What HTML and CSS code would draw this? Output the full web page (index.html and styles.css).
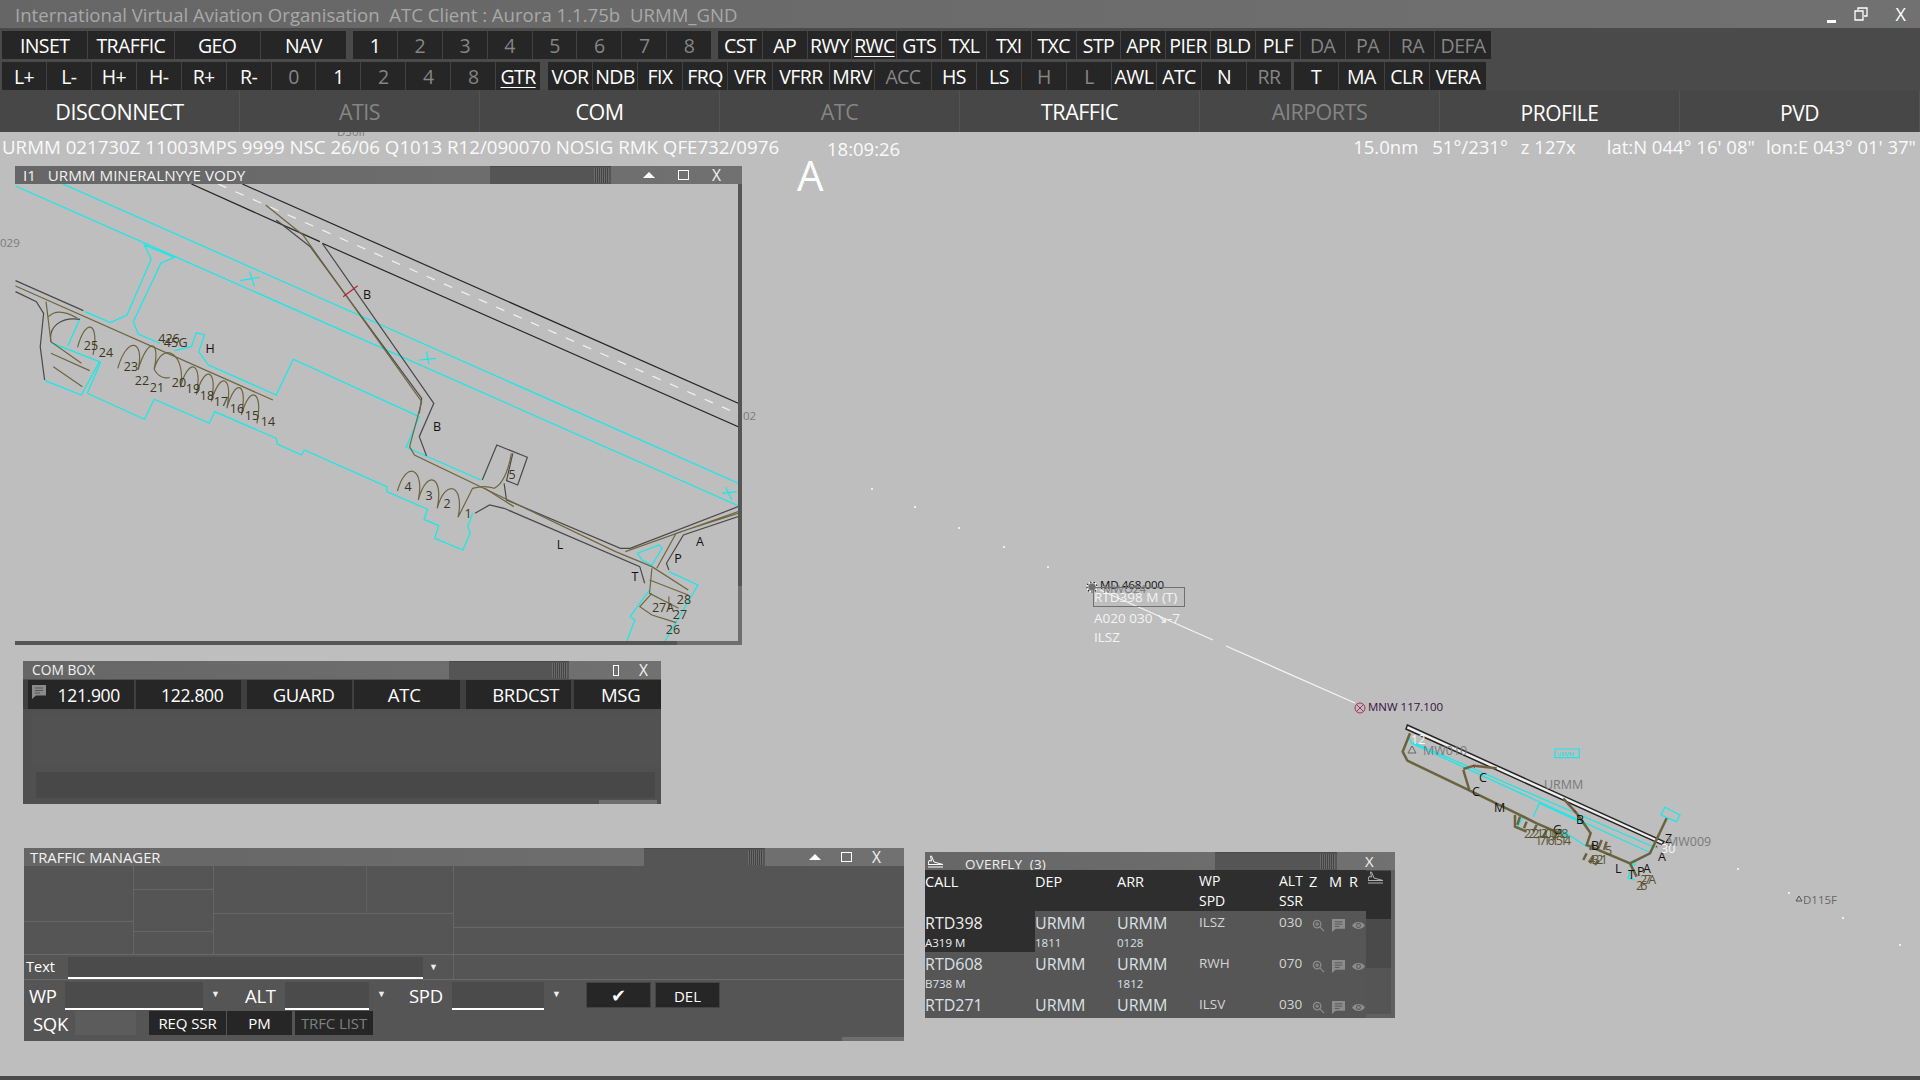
FILE: index.html
```html
<!DOCTYPE html>
<html lang="en">
<head>
<meta charset="utf-8">
<title>Aurora ATC Client</title>
<link rel="stylesheet" href="styles.css">
</head>
<body>
<svg class="defs" width="0" height="0">
  <symbol id="i-mag" viewBox="0 0 14 14"><circle cx="5.5" cy="5.5" r="4" fill="none" stroke="currentColor" stroke-width="1.4"/><path d="M8.5 8.5L13 13M3.5 5.5h4M5.5 3.5v4" stroke="currentColor" stroke-width="1.3" fill="none"/></symbol>
  <symbol id="i-chat" viewBox="0 0 14 14"><path d="M0 0h14v10.500h-10l-4 3.500z" fill="currentColor"/><path d="M3 3h8M3 5.500h8M3 8h5" stroke="#565656" stroke-width="1"/></symbol>
  <symbol id="i-eye" viewBox="0 0 14 10"><path d="M0 5C3 0 11 0 14 5C11 10 3 10 0 5z" fill="currentColor"/><circle cx="7" cy="5" r="2.600" fill="#565656"/><circle cx="7" cy="5" r="1.500" fill="currentColor"/></symbol>
  <symbol id="i-plane" viewBox="0 0 15 13"><path d="M0 12h15M0 9.500h15L6 7 3.500 1h-1l1 5L1 5.500z" stroke="currentColor" stroke-width="1" fill="none"/></symbol>
</svg>

<header class="titlebar">
  <span class="app-title">International Virtual Aviation Organisation&nbsp; ATC Client : Aurora 1.1.75b&nbsp; URMM_GND</span>
  <div class="app-controls">
    <span class="min-mark"></span>
    <svg class="restore" width="14" height="14" viewBox="0 0 14 14"><path d="M4 3V1h9v8h-3M1 4h8v9H1z" fill="none" stroke="#fff" stroke-width="1.300"/></svg>
    <span class="app-x">X</span>
  </div>
</header>

<nav class="toolbar">
  <div class="tool-row">
    <div class="group g1a"><button class="btn">INSET</button><button class="btn">TRAFFIC</button><button class="btn">GEO</button><button class="btn">NAV</button></div>
    <div class="group g1b"><button class="btn">1</button><button class="btn dim">2</button><button class="btn dim">3</button><button class="btn dim">4</button><button class="btn dim">5</button><button class="btn dim">6</button><button class="btn dim">7</button><button class="btn dim">8</button></div>
    <div class="group g1c"><button class="btn">CST</button><button class="btn">AP</button><button class="btn">RWY</button><button class="btn"><u>RWC</u></button><button class="btn">GTS</button><button class="btn">TXL</button><button class="btn">TXI</button><button class="btn">TXC</button><button class="btn">STP</button><button class="btn">APR</button><button class="btn">PIER</button><button class="btn">BLD</button><button class="btn">PLF</button><button class="btn dim">DA</button><button class="btn dim">PA</button><button class="btn dim">RA</button><button class="btn dim wide">DEFA</button></div>
  </div>
  <div class="tool-row">
    <div class="group g2a"><button class="btn">L+</button><button class="btn">L-</button><button class="btn">H+</button><button class="btn">H-</button><button class="btn">R+</button><button class="btn">R-</button><button class="btn dim">0</button><button class="btn">1</button><button class="btn dim">2</button><button class="btn dim">4</button><button class="btn dim">8</button><button class="btn"><u>GTR</u></button></div>
    <div class="group g2b"><button class="btn">VOR</button><button class="btn">NDB</button><button class="btn">FIX</button><button class="btn">FRQ</button><button class="btn">VFR</button><button class="btn wide">VFRR</button><button class="btn">MRV</button><button class="btn dim wide">ACC</button><button class="btn">HS</button><button class="btn">LS</button><button class="btn dim">H</button><button class="btn dim">L</button><button class="btn">AWL</button><button class="btn">ATC</button><button class="btn">N</button><button class="btn dim">RR</button></div>
    <div class="group g2c"><button class="btn">T</button><button class="btn">MA</button><button class="btn">CLR</button><button class="btn wide">VERA</button></div>
  </div>
</nav>

<nav class="tabs">
  <div class="tab">DISCONNECT</div><div class="tab dim">ATIS</div><div class="tab">COM</div><div class="tab dim">ATC</div><div class="tab">TRAFFIC</div><div class="tab dim">AIRPORTS</div><div class="tab low">PROFILE</div><div class="tab low">PVD</div>
</nav>

<main class="desktop">
  <div class="status">
    <span class="metar">URMM 021730Z 11003MPS 9999 NSC 26/06 Q1013 R12/090070 NOSIG RMK QFE732/0976</span>
    <span class="clock">18:09:26</span>
    <div class="readout"><span>15.0nm</span><span>51°/231°</span><span>z 127x</span><span>lat:N 044° 16' 08"</span><span>lon:E 043° 01' 37"</span></div>
  </div>
  <div class="big-a">A</div>

  <svg class="scope" viewBox="0 132 1920 948" width="1920" height="948">
    <text class="gray-lbl" x="337" y="136">D30II</text>
    <text class="gray-lbl" x="0" y="247">029</text>
    <text class="gray-lbl" x="743" y="420">02</text>
    <g fill="#fff">
      <circle cx="872" cy="489" r="1"/><circle cx="915" cy="507" r="1"/><circle cx="959" cy="528" r="1"/><circle cx="1004" cy="547" r="1"/><circle cx="1048" cy="567" r="1"/>
      <circle cx="1738" cy="869" r="1"/><circle cx="1789" cy="893" r="1"/><circle cx="1843" cy="918" r="1"/><circle cx="1900" cy="945" r="1"/>
    </g>
    <path d="M1100 590L1213 640M1226 646L1355 703" stroke="#f4f4f4" stroke-width="1.300" fill="none"/>
    <circle cx="1092" cy="587" r="3.500" fill="#707070"/>
    <circle cx="1092" cy="587" r="5" fill="none" stroke="#fff" stroke-width="1.200"/>
    <circle cx="1092" cy="587" r="5" fill="none" stroke="#111" stroke-width="1.200" stroke-dasharray="1.500 2"/>
    <text class="wp-text" x="1100" y="589">MD 468.000</text>
    <text class="gray-lbl" x="1103" y="593">MWO24</text>
    <rect x="1093.500" y="587.500" width="91" height="19" fill="none" stroke="#707070"/>
    <text class="tag" x="1094" y="602">RTD398 M (T)</text>
    <text class="tag" x="1094" y="623">A020 030 ↘-7</text>
    <text class="tag" x="1094" y="642">ILSZ</text>
    <circle cx="1360" cy="708" r="5" fill="none" stroke="#a8325f"/>
    <path d="M1356.500 704.500l7 7M1363.500 704.500l-7 7" stroke="#a8325f"/>
    <text class="wp-text purple" x="1368" y="711">MNW 117.100</text>
    <path d="M1796 901l3-5 3 5z" fill="none" stroke="#555"/>
    <text class="gray-lbl dark" x="1803" y="904">D115F</text>

    <g transform="translate(1380,700) scale(.3333)" class="lines">
      <path class="rw" d="M82 75L852 425L846 434L78 87Z"/>
      <path class="cy" d="M88 115L95 130L815 460M100 128L830 445M460 350L478 310L620 375M410 385L430 350L560 410L545 390L620 440L630 400"/>
      <path class="cy" d="M525 147H598V173H525ZM855 322L900 345L890 365L843 345Z"/>
      <path class="cy" d="M262 268L270 275M745 490L765 480L765 495ZM750 510L745 535L765 540"/>
      <path class="ol2" d="M90 100L68 155L82 182L265 270L410 340L470 370L540 400M250 207L282 197L350 205M250 210L268 270M405 345V380L440 395M550 295L590 340L632 400L620 435L750 490L810 460L860 355M750 490L770 530"/>
      <path class="ol2" d="M420 350L412 375M440 365L432 385M470 375L460 395M500 390L490 410M530 400L520 420M640 430L630 450M665 420L655 445M680 425L672 450M620 460L610 480M640 470L630 490M655 480L645 495"/>
      <path class="rd" d="M280 195L284 203M583 330L588 337M828 438L832 442"/>
    </g>
    <g class="air-lbl">
      <text class="wh" x="1411" y="744">12</text>
      <text class="gr" x="1423" y="755">MW010</text>
      <path d="M1412 746l4 7h-8z" fill="none" stroke="#666"/>
      <text class="cyt" x="1557" y="756">URMM</text>
      <text class="gr" x="1544" y="789">URMM</text>
      <text x="1479" y="782">C</text><text x="1472" y="796">C</text><text x="1494" y="812">M</text>
      <text x="1553" y="834">G</text><text class="ol3" x="1524" y="838">2221201918</text><text class="ol3" x="1535" y="845">17161514</text>
      <text x="1576" y="824">B</text><text x="1591" y="850">B</text><text class="ol3" x="1605" y="855">5</text><text class="ol3" x="1588" y="864">4321</text>
      <text x="1615" y="873">L</text><text x="1628" y="879">T</text><text x="1637" y="876">P</text><text x="1643" y="873">A</text><text x="1658" y="861">A</text>
      <text class="ol3" x="1640" y="884">27A</text><text class="ol3" x="1636" y="890">26</text>
      <text class="wh" x="1661" y="853">30</text><text x="1665" y="843">Z</text>
      <text class="gr" x="1667" y="846">MW009</text>
    </g>
  </svg>

  <section class="win win-map">
    <div class="win-title"><span class="t-text">I1&nbsp;&nbsp; URMM MINERALNYYE VODY</span><div class="win-scroll"><i></i></div><div class="win-ctrl"><span class="tri"></span><span class="sq"></span><span>X</span></div></div>
    <div class="map-body">
      <svg class="inset" width="723" height="457" viewBox="0 0 723 457">
        <g transform="translate(-15,-24) scale(.4847,.3333)" class="lines">
          <path class="dk" d="M500 72L1523 730M395 72L660 245M665 250L1523 800"/>
          <path class="dash" d="M450 72L1515 757"/>
          <path class="cy" d="M130 72L1523 970M32 78L1523 1037"/>
          <path class="cy" d="M495 362L535 352M515 335L525 380M865 600L900 595M880 575L885 612M1490 1000L1520 995M1497 982L1510 1020"/>
          <path class="cy" d="M175 455L228 488L262 465L312 298L298 255L360 292L332 310L275 485L285 522L330 550M360 572L395 560L405 518L422 525L410 575L430 615L570 705L605 598L865 770L838 862L992 960"/>
          <path class="cy" d="M105 548L205 605L168 705L93 662M140 558L165 475M180 700L208 605M180 700L298 778L318 718L432 790L443 755L570 835L572 852L622 885L628 870L798 980L798 995L882 1048L875 1078L905 1097L897 1135L955 1170L970 1120L965 1100L975 1060"/>
          <path class="cy" d="M1380 1235L1440 1275L1372 1443M1340 1290L1300 1370L1310 1380L1293 1443M1315 1180L1360 1155L1366 1165L1345 1215L1325 1200Z"/>
          <path class="dkg" d="M570 180L640 260L870 715L865 760M665 250L895 730L865 830L880 888M980 1060L1010 1035L1040 1045L1320 1220L1330 1270M1040 970L1045 1020L1280 1165L1300 1165L1523 1040M1380 1230L1375 1210L1410 1125L1523 1070"/>
          <path class="dkg" d="M32 362L172 452M32 395L75 425L90 460L83 560L92 660M105 545C100 500 125 470 165 478M995 960L1025 855L1088 892L1068 975L1045 962L1058 880"/>
          <path class="ol" d="M548 135L625 225L870 725L845 860L855 885L1270 1175L1345 1220L1420 1290M1290 1175L1523 1055M1355 1225L1395 1120L1523 1060M1345 1225L1340 1300L1400 1345M1340 1260L1420 1305M1345 1300L1320 1340L1345 1365L1395 1388M1380 1310L1380 1350"/>
          <path class="ol" d="M32 378L563 720M95 425L105 545L168 610M105 580L185 632M110 620L170 680M100 470Q120 440 160 475"/>
          <path class="ol" d="M160 562C178 467 206 490 192 585M243 625C261 530 299 535 285 630M285 630C303 535 332 533 318 628M318 628C336 533 386 587 372 682M372 682C390 587 419 609 405 704M405 704C423 609 450 630 436 725M436 725C454 630 482 650 468 745M468 745C486 650 512 670 498 765M498 765C516 670 544 695 530 790M318 628Q330 660 350 652"/>
          <path class="ol" d="M820 993C838 898 877 925 863 1020M863 1020C881 925 916 950 902 1045M902 1045C920 950 959 977 945 1072M945 1072L975 985Q1000 975 1020 985Q1045 965 1055 880M1000 985L1060 1040"/>
          <path class="rd" d="M708 410L738 377"/>
        </g>
        <g class="lbl">
          <text x="352" y="115">B</text><text x="422" y="247">B</text><text x="195" y="169">H</text>
          <text class="o" x="76" y="166">25</text><text class="o" x="91" y="173">24</text><text class="o" x="116" y="187">23</text><text class="o" x="127" y="201">22</text><text class="o" x="142" y="208">21</text><text class="o" x="164" y="203">20</text><text class="o" x="178" y="209">19</text><text class="o" x="192" y="216">18</text><text class="o" x="206" y="222">17</text><text class="o" x="222" y="229">16</text><text class="o" x="237" y="236">15</text><text class="o" x="253" y="242">14</text>
          <text class="o" x="393" y="307">4</text><text class="o" x="414" y="316">3</text><text class="o" x="432" y="324">2</text><text class="o" x="453" y="334">1</text><text class="o" x="497" y="295">5</text>
          <text x="545" y="365">L</text><text x="685" y="362">A</text><text x="663" y="379">P</text><text x="620" y="397">T</text>
          <text class="o" x="648" y="428">27A</text><text class="o" x="669" y="420">28</text><text class="o" x="665" y="435">27</text><text class="o" x="658" y="450">26</text>
          <text class="o" x="154" y="159">426</text><text class="o" x="156" y="163">45</text><text class="o" x="168" y="163">G</text>
        </g>
      </svg>
      <div class="sb-v"></div>
      <div class="sb-h"></div>
    </div>
  </section>

  <section class="win win-com">
    <div class="win-title"><span class="t-text">COM BOX</span><div class="win-scroll"><i></i></div><div class="win-ctrl"><span class="sq narrow"></span><span>X</span></div></div>
    <div class="com-btns">
      <button class="cbtn freq pad-chat"><svg class="chat-badge" width="14" height="14"><use href="#i-chat"/></svg>121.900</button><button class="cbtn freq pad-freq">122.800</button>
      <button class="cbtn sp pad-guard">GUARD</button><button class="cbtn pad-atc">ATC</button><button class="cbtn sp pad-brd">BRDCST</button><button class="cbtn last">MSG</button>
    </div>
    <div class="com-log"></div>
    <div class="com-input"></div>
    <div class="com-foot"><i></i></div>
  </section>

  <section class="win win-tm">
    <div class="win-title"><span class="t-text">TRAFFIC MANAGER</span><div class="win-scroll"><i></i></div><div class="win-ctrl"><span class="tri"></span><span class="sq"></span><span>X</span></div></div>
    <div class="tm-grid">
      <div class="tm-col c1"><div class="r56"></div><div class="fill"></div></div>
      <div class="tm-col c2"><div class="r24"></div><div class="r42"></div><div class="fill"></div></div>
      <div class="tm-col c3"><div class="tm-split"><div class="c3a"></div><div class="fill"></div></div><div class="fill"></div></div>
      <div class="tm-col c4"><div class="r62"></div><div class="fill"></div></div>
    </div>
    <div class="tm-text">
      <div class="tm-text-l"><span class="tlabel">Text</span><div class="field f-text"></div><span class="caret">▼</span></div>
      <div class="fill"></div>
    </div>
    <div class="tm-row">
      <span class="flabel l-wp">WP</span><div class="field f-wp"></div><span class="caret">▼</span>
      <span class="flabel l-alt">ALT</span><div class="field f-alt"></div><span class="caret">▼</span>
      <span class="flabel l-spd">SPD</span><div class="field f-spd"></div><span class="caret">▼</span>
      <button class="tbtn ok">✔</button><button class="tbtn del">DEL</button>
    </div>
    <div class="tm-row2">
      <span class="flabel l-sqk">SQK</span><div class="sqk-box"></div>
      <button class="sbtn s1">REQ SSR</button><button class="sbtn s2">PM</button><button class="sbtn s3">TRFC LIST</button>
    </div>
    <div class="tm-foot"><i></i></div>
  </section>

  <section class="win win-ov">
    <div class="win-title ov-title"><svg class="ov-plane" width="15" height="13"><use href="#i-plane"/></svg><span class="t-text ov-text">OVERFLY&nbsp; (3)</span><div class="win-scroll"><i></i></div><div class="win-ctrl"><span>X</span></div></div>
    <div class="ov-body">
      <div class="ov-table">
        <div class="ov-row head">
          <span class="big">CALL</span><span class="big">DEP</span><span class="big">ARR</span><span class="stack">WP<br>SPD</span><span class="stack">ALT<br>SSR</span><span class="big">Z</span><span class="big">M</span><span class="big">R</span>
        </div>
        <div class="ov-row flight">
          <span class="cs sel">RTD398<small>A319 M</small></span><span class="cs">URMM<small>1811</small></span><span class="cs">URMM<small>0128</small></span><span class="wp">ILSZ</span><span class="wp">030</span>
          <svg class="ic"><use href="#i-mag"/></svg><svg class="ic"><use href="#i-chat"/></svg><svg class="ic"><use href="#i-eye"/></svg>
        </div>
        <div class="ov-row flight">
          <span class="cs">RTD608<small>B738 M</small></span><span class="cs">URMM</span><span class="cs">URMM<small>1812</small></span><span class="wp">RWH</span><span class="wp">070</span>
          <svg class="ic"><use href="#i-mag"/></svg><svg class="ic"><use href="#i-chat"/></svg><svg class="ic"><use href="#i-eye"/></svg>
        </div>
        <div class="ov-row flight short">
          <span class="cs">RTD271</span><span class="cs">URMM</span><span class="cs">URMM</span><span class="wp">ILSV</span><span class="wp">030</span>
          <svg class="ic"><use href="#i-mag"/></svg><svg class="ic"><use href="#i-chat"/></svg><svg class="ic"><use href="#i-eye"/></svg>
        </div>
      </div>
      <div class="ov-side"><div class="ov-side-head"><svg class="ov-plane2" width="15" height="13"><use href="#i-plane"/></svg></div></div>
    </div>
  </section>
</main>
<div class="bottom-bar"></div>
</body>
</html>
```

FILE: styles.css
```css
* { box-sizing: border-box; }
html, body { margin: 0; height: 100%; }
body {
  width: 1920px; height: 1080px; overflow: hidden;
  display: flex; flex-direction: column;
  background: #bebebe; color: #fff;
  font-family: "Open Sans", "Noto Sans", sans-serif;
}
.defs { position: absolute; }
button { font: inherit; color: inherit; border: 0; padding: 0; margin: 0; background: none; }

.titlebar {
  height: 28px; flex: none; display: flex; align-items: center;
  padding-left: 15px; background: linear-gradient(90deg, #666 0%, #717171 100%);
}
.app-title { font-size: 18.600px; color: #a8a8a8; white-space: nowrap; }
.app-controls { margin-left: auto; display: flex; align-items: center; gap: 0; height: 100%; }
.min-mark { width: 9px; height: 3px; background: #fff; margin: 14px 18px 0 0; }
.restore { margin-right: 28px; }
.app-x { font-size: 18px; margin-right: 14px; }

.toolbar { height: 62px; flex: none; background: #4a4a4a; padding: 3px 0 0 2px; display: flex; flex-direction: column; gap: 3px; }
.tool-row { height: 28px; display: flex; }
.group { display: flex; height: 28px; }
.btn {
  flex: 1 1 0; min-width: 0; background: #262626; border-right: 1px solid #424242;
  font-size: 19.500px; letter-spacing: -.6px; color: #fff; white-space: nowrap; overflow: hidden;
}
.btn:last-child { border-right: 0; }
.btn.dim { color: #858585; }
.btn.wide { flex-grow: 1.27; }
.btn u { text-underline-offset: 3px; }
.g1a { width: 344px; }
.g1b { width: 358px; margin-left: 7px; }
.g1c { width: 773px; margin-left: 7px; }
.g2a { width: 538px; }
.g2b { width: 743px; margin-left: 8px; }
.g2c { width: 192px; margin-left: 3px; }

.tabs { height: 42px; flex: none; display: flex; background: #474747; }
.tab {
  width: 240px; display: flex; align-items: center; justify-content: center;
  font-size: 21.500px; letter-spacing: -.5px; border-right: 1px solid #525252;
}
.tab.dim { color: #858585; }
.tab.low { padding-top: 4px; font-size: 21px; }

.desktop { flex: 1; position: relative; overflow: hidden; background: #bebebe; }
.status { height: 28px; display: flex; align-items: center; padding-left: 2px; font-size: 18.500px; color: #fafafa; white-space: nowrap; }
.metar { width: 825px; flex: none; font-size: 18.700px; }
.clock { padding-top: 4px; }
.readout { margin-left: auto; display: flex; gap: 17px; padding-right: 4px; }
.readout span:nth-child(2) { margin-left: -3px; }
.readout span:nth-child(3) { margin-left: -4px; }
.readout span:nth-child(4) { margin-left: 14px; }
.readout span:nth-child(5) { margin-left: -6px; }
.big-a { position: absolute; left: 797px; top: 18px; font-size: 42px; line-height: 50px; color: #fff; }

.scope { position: absolute; left: 0; top: 0; }
.scope text { font-family: "Open Sans", sans-serif; }
.gray-lbl { font-size: 11.500px; fill: #7c7c7c; }
.gray-lbl.dark { fill: #666; }
.wp-text { font-size: 11.500px; fill: #111; }
.wp-text.purple { fill: #3a1040; }
.tag { font-size: 13.500px; fill: #f4f4f4; }
.air-lbl text { font-size: 12.500px; fill: #111; }
.air-lbl .wh { fill: #f6f6f6; }
.air-lbl .gr { fill: #7a7a7a; }
.air-lbl .cyt { fill: #16dede; font-size: 5.500px; }
.air-lbl .ol3 { fill: #5b5330; letter-spacing: -3px; }

.lines path { fill: none; vector-effect: non-scaling-stroke; }
.lines .dk { stroke: #262626; stroke-width: 1.200; }
.lines .dash { stroke: #f2f2f2; stroke-width: 1.200; stroke-dasharray: 9 10; }
.lines .cy { stroke: #12eaea; stroke-width: 1.200; }
.lines .ol { stroke: #6e6640; stroke-width: 1.200; }
.lines .ol2 { stroke: #6b6340; stroke-width: 2.500; }
.lines .dkg { stroke: #4a4a4a; stroke-width: 1.200; }
.lines .rd { stroke: #c01f2c; stroke-width: 1.200; }
.lines .rw { fill: #eee; stroke: #262626; stroke-width: 1.500; }

.win { position: absolute; display: flex; flex-direction: column; }
.win-title {
  height: 18px; flex: none; display: flex; align-items: center; font-size: 14.800px; line-height: 18px;
  color: #f2f2f2; background: linear-gradient(90deg, #666 0%, #717171 100%);
  overflow: hidden; white-space: nowrap;
}
.t-text { padding-left: 8px; }
.win-scroll { margin-left: auto; height: 18px; background: #555; border-top: 1px solid #4a4a4a; position: relative; flex: none; }
.win-scroll i { position: absolute; right: 2px; top: 1px; bottom: 1px; width: 15px; background: repeating-linear-gradient(90deg, #6a6a6a 0 1px, #444 1px 2px); }
.win-ctrl { display: flex; align-items: center; font-size: 15.500px; line-height: 18px; height: 18px; flex: none; }
.tri { width: 0; height: 0; border-left: 6px solid transparent; border-right: 6px solid transparent; border-bottom: 6px solid #fff; }
.sq { width: 11px; height: 10px; border: 1.500px solid #fff; }
.sq.narrow { width: 6px; height: 11px; border-width: 1px; }

.win-map { left: 15px; top: 34px; width: 727px; height: 479px; }
.win-map .win-title { font-size: 15.200px; }
.win-map .win-scroll { width: 121px; }
.win-map .win-ctrl { width: 131px; padding-left: 32px; gap: 23px; }
.map-body { flex: 1; display: grid; grid-template-columns: 723px 4px; grid-template-rows: 457px 4px; overflow: hidden; }
.inset { display: block; }
.lbl text { font-size: 12.500px; fill: #111; text-anchor: middle; }
.lbl .o { fill: #3c3620; }
.sb-v { background: linear-gradient(180deg, #555 0 88%, #6e6e6e 88%); }
.sb-h { background: linear-gradient(90deg, #555 0 91%, #6e6e6e 91%); grid-column: 1 / 3; }

.win-com { left: 23px; top: 529px; width: 638px; height: 143px; background: #505050; }
.win-com .win-title { font-size: 13.800px; }
.win-com .t-text { padding-left: 9px; }
.win-com .win-scroll { width: 120px; }
.win-com .win-ctrl { width: 92px; padding-left: 44px; gap: 20px; font-size: 15.500px; }
.com-btns { height: 29px; margin-top: 1px; padding-left: 5px; display: flex; flex: none; background: #404040; }
.cbtn { width: 106px; margin-right: 2px; background: #262626; font-size: 18.500px; letter-spacing: -.3px; position: relative; }
.cbtn.freq { font-size: 17.500px; }
.pad-chat { padding-left: 16px; }
.pad-freq { padding-left: 8px; }
.pad-guard { padding-left: 8px; }
.pad-atc { padding-right: 6px; }
.pad-brd { padding-left: 14px; }
.chat-badge { position: absolute; left: 4px; top: 5px; color: #8a8a8a; }
.cbtn.sp { margin-left: 4px; }
.cbtn.last { width: 87px; margin: 0 0 0 1px; padding-left: 6px; }
.com-log { height: 54px; margin: 4px 0 0 9px; background: #525252; flex: none; }
.com-input { height: 26px; margin: 5px 6px 0 13px; background: #484848; flex: none; }
.com-foot { flex: 1; position: relative; }
.com-foot i { position: absolute; right: 4px; bottom: 0; width: 58px; height: 4px; background: #6e6e6e; }

.win-tm { left: 24px; top: 716px; width: 880px; height: 193px; background: #555; }
.win-tm .t-text { padding-left: 6px; }
.win-tm .win-scroll { width: 121px; }
.win-tm .win-ctrl { width: 139px; padding-left: 44px; gap: 20px; }
.tm-grid { height: 89px; flex: none; display: grid; grid-template-columns: 110px 80px 240px 1fr; border-bottom: 1px solid #6a6a6a; }
.tm-col { display: flex; flex-direction: column; border-right: 1px solid #666; }
.c4 { border-right: 0; }
.fill { flex: 1; }
.r56 { height: 56px; border-bottom: 1px solid #666; }
.r24 { height: 24px; border-bottom: 1px solid #666; }
.r42 { height: 42px; border-bottom: 1px solid #666; }
.r62 { height: 62px; border-bottom: 1px solid #666; }
.tm-split { height: 48px; display: flex; border-bottom: 1px solid #666; }
.c3a { width: 153px; border-right: 1px solid #606060; }
.tm-text { height: 25px; flex: none; display: flex; border-bottom: 1px solid #6a6a6a; }
.tm-text-l { width: 430px; display: flex; align-items: flex-start; border-right: 1px solid #666; padding-top: 2px; }
.tlabel { width: 44px; padding-left: 2px; font-size: 14.500px; line-height: 20px; }
.field { background: #4b4b4b; border-bottom: 2px solid #fff; height: 22px; flex: none; }
.f-text { width: 355px; }
.caret { font-size: 9px; color: #eee; line-height: 20px; }
.tm-text .caret { margin-left: 6px; }
.tm-row { height: 30px; flex: none; display: flex; align-items: flex-start; padding-top: 2px; }
.tm-row .field { height: 28px; }
.flabel { font-size: 18.500px; line-height: 28px; letter-spacing: -.3px; }
.l-wp { margin-left: 5px; width: 36px; }
.f-wp { width: 138px; }
.tm-row .caret { margin-left: 8px; width: 12px; line-height: 24px; }
.l-alt { margin-left: 22px; width: 40px; }
.f-alt { width: 84px; }
.l-spd { margin-left: 20px; width: 43px; }
.f-spd { width: 92px; }
.tbtn { height: 26px; background: #262626; border: 1px solid #444; }
.ok { width: 65px; margin-left: 22px; font-size: 18px; line-height: 22px; }
.del { width: 65px; margin-left: 4px; font-size: 15px; padding-top: 2px; }
.tm-row2 { height: 24px; margin-top: 1px; flex: none; display: flex; }
.l-sqk { margin-left: 9px; width: 42px; line-height: 26px; }
.sqk-box { width: 61px; background: #5c5c5c; }
.sbtn { background: #262626; font-size: 15px; letter-spacing: -.1px; white-space: nowrap; }
.s1 { width: 77px; margin-left: 13px; }
.s2 { width: 65px; margin-left: 1px; }
.s3 { width: 78px; margin-left: 3px; color: #808080; }
.tm-foot { flex: 1; position: relative; }
.tm-foot i { position: absolute; right: 0; bottom: 0; width: 62px; height: 4px; background: #6e6e6e; }

.win-ov { left: 925px; top: 720px; width: 470px; height: 166px; background: #606060; }
.ov-title { font-size: 13.500px; }
.ov-plane { flex: none; margin-left: 3px; color: #fff; }
.ov-text { padding: 1px 0 0 22px; letter-spacing: .2px; line-height: 22px; height: 18px; color: #eee; align-self: flex-start; }
.win-ov .win-scroll { width: 122px; }
.win-ov .win-ctrl { width: 58px; font-size: 15px; padding: 0 0 0 28px; }
.ov-body { flex: 1; display: flex; min-height: 0; }
.ov-table { width: 441px; flex: none; display: flex; flex-direction: column; }
.ov-row { display: grid; grid-template-columns: 110px 82px 82px 80px 30px 20px 20px 17px; flex: none; }
.head { height: 41px; background: #2e2e2e; color: #fff; font-size: 14.500px; }
.head .big { line-height: 22px; padding-top: 1px; }
.head .stack { font-size: 14px; line-height: 20px; padding-top: 1px; }
.flight { height: 41px; background: #565656; color: #ddd; }
.flight.short { height: 25px; overflow: hidden; }
.cs { display: block; font-size: 16px; line-height: 24px; padding-top: 0; color: #dde1e6; }
.cs small { display: block; font-size: 11.500px; line-height: 14px; padding-top: 1px; }
.cs.sel { background: #2e2e2e; color: #eee; }
.wp { font-size: 13.500px; line-height: 20px; padding-top: 1px; color: #d4d4d4; }
.ic { width: 13px; height: 13px; margin: 8px 0 0 3px; color: #8c8c8c; }
.ov-side { width: 25px; background: linear-gradient(180deg, #4a4a4a 0 68%, #555 68%); height: 144px; }
.ov-side-head { height: 48px; background: #2e2e2e; }
.ov-plane2 { color: #b0b0b0; margin: 1px 0 0 2px; display: block; }

.bottom-bar { height: 4px; flex: none; background: #4a4a4a; }
```
